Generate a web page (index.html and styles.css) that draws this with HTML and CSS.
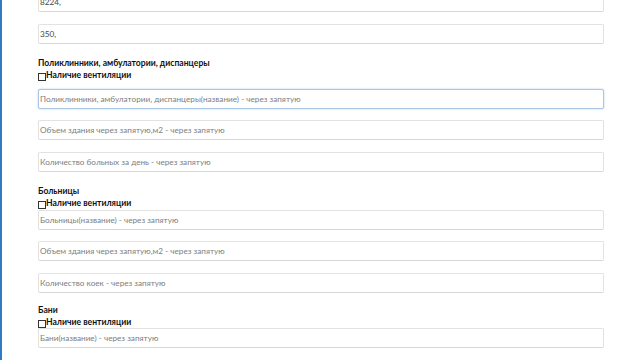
FILE: index.html
```html
<!DOCTYPE html>
<html lang="ru">
<head>
<meta charset="utf-8">
<link rel="stylesheet" href="styles.css">
</head>
<body>
<div class="page">
  <form class="form">
    <input class="field first" type="text" value="8224,">
    <input class="field" type="text" value="350,">

    <div class="group group-first">
      <div class="title">Поликлинники, амбулатории, диспанцеры</div>
      <label class="check"><span class="box"></span>Наличие вентиляции</label>
      <input class="field focus" type="text" placeholder="Поликлинники, амбулатории, диспанцеры(название) - через запятую">
      <input class="field" type="text" placeholder="Объем здания через запятую,м2 - через запятую">
      <input class="field" type="text" placeholder="Количество больных за день - через запятую">
    </div>

    <div class="group">
      <div class="title">Больницы</div>
      <label class="check"><span class="box"></span>Наличие вентиляции</label>
      <input class="field" type="text" placeholder="Больницы(название) - через запятую">
      <input class="field" type="text" placeholder="Объем здания через запятую,м2 - через запятую">
      <input class="field" type="text" placeholder="Количество коек - через запятую">
    </div>

    <div class="group group-last">
      <div class="title">Бани</div>
      <label class="check"><span class="box"></span>Наличие вентиляции</label>
      <input class="field" type="text" placeholder="Бани(название) - через запятую">
      <input class="field" type="text" placeholder="">
    </div>
  </form>
</div>
</body>
</html>
```

FILE: styles.css
```css
html, body {
  margin: 0;
  padding: 0;
  background: #ffffff;
  overflow: hidden;
}
body {
  font-family: "Lato", "Noto Sans", sans-serif;
  font-size: 8.6px;
  color: #1a1a1a;
  height: 360px;
}
.page {
  height: 360px;
  border-left: 2px solid #2f7cc4;
  box-sizing: border-box;
  padding-left: 36px;
}
.form {
  width: 566px;
  display: flex;
  flex-direction: column;
}
.field {
  display: block;
  box-sizing: border-box;
  width: 566px;
  height: 20px;
  margin: 0 0 11.5px 0;
  padding: 0 0 0 1px;
  border: 1px solid #e2e2e2;
  border-bottom-color: #d6d6d6;
  border-radius: 2px;
  font-family: inherit;
  font-size: 8.2px;
  color: #444444;
  background: #ffffff;
  outline: none;
}
.field::placeholder {
  color: #7e7e7e;
}
.field.first {
  margin-top: -8px;
}
.field.focus {
  border-color: #a9c6e2;
  box-shadow: 0 0 2px rgba(102, 160, 220, 0.55);
}
.group {
  display: flex;
  flex-direction: column;
}
.title {
  font-weight: bold;
  height: 12px;
  line-height: 12px;
  margin-top: 1.5px;
  color: #111111;
}
.group-last .title {
  margin-top: 0;
}
.check {
  display: flex;
  align-items: flex-start;
  font-weight: bold;
  height: 12px;
  line-height: 12px;
  margin-bottom: 1px;
  color: #111111;
}
.group-first .check {
  margin-bottom: 8px;
}
.group-last .check {
  margin-bottom: 0;
}
.box {
  display: block;
  flex: none;
  width: 6px;
  height: 6px;
  border: 1px solid #333333;
  margin-top: 4px;
  background: #ffffff;
}
```
